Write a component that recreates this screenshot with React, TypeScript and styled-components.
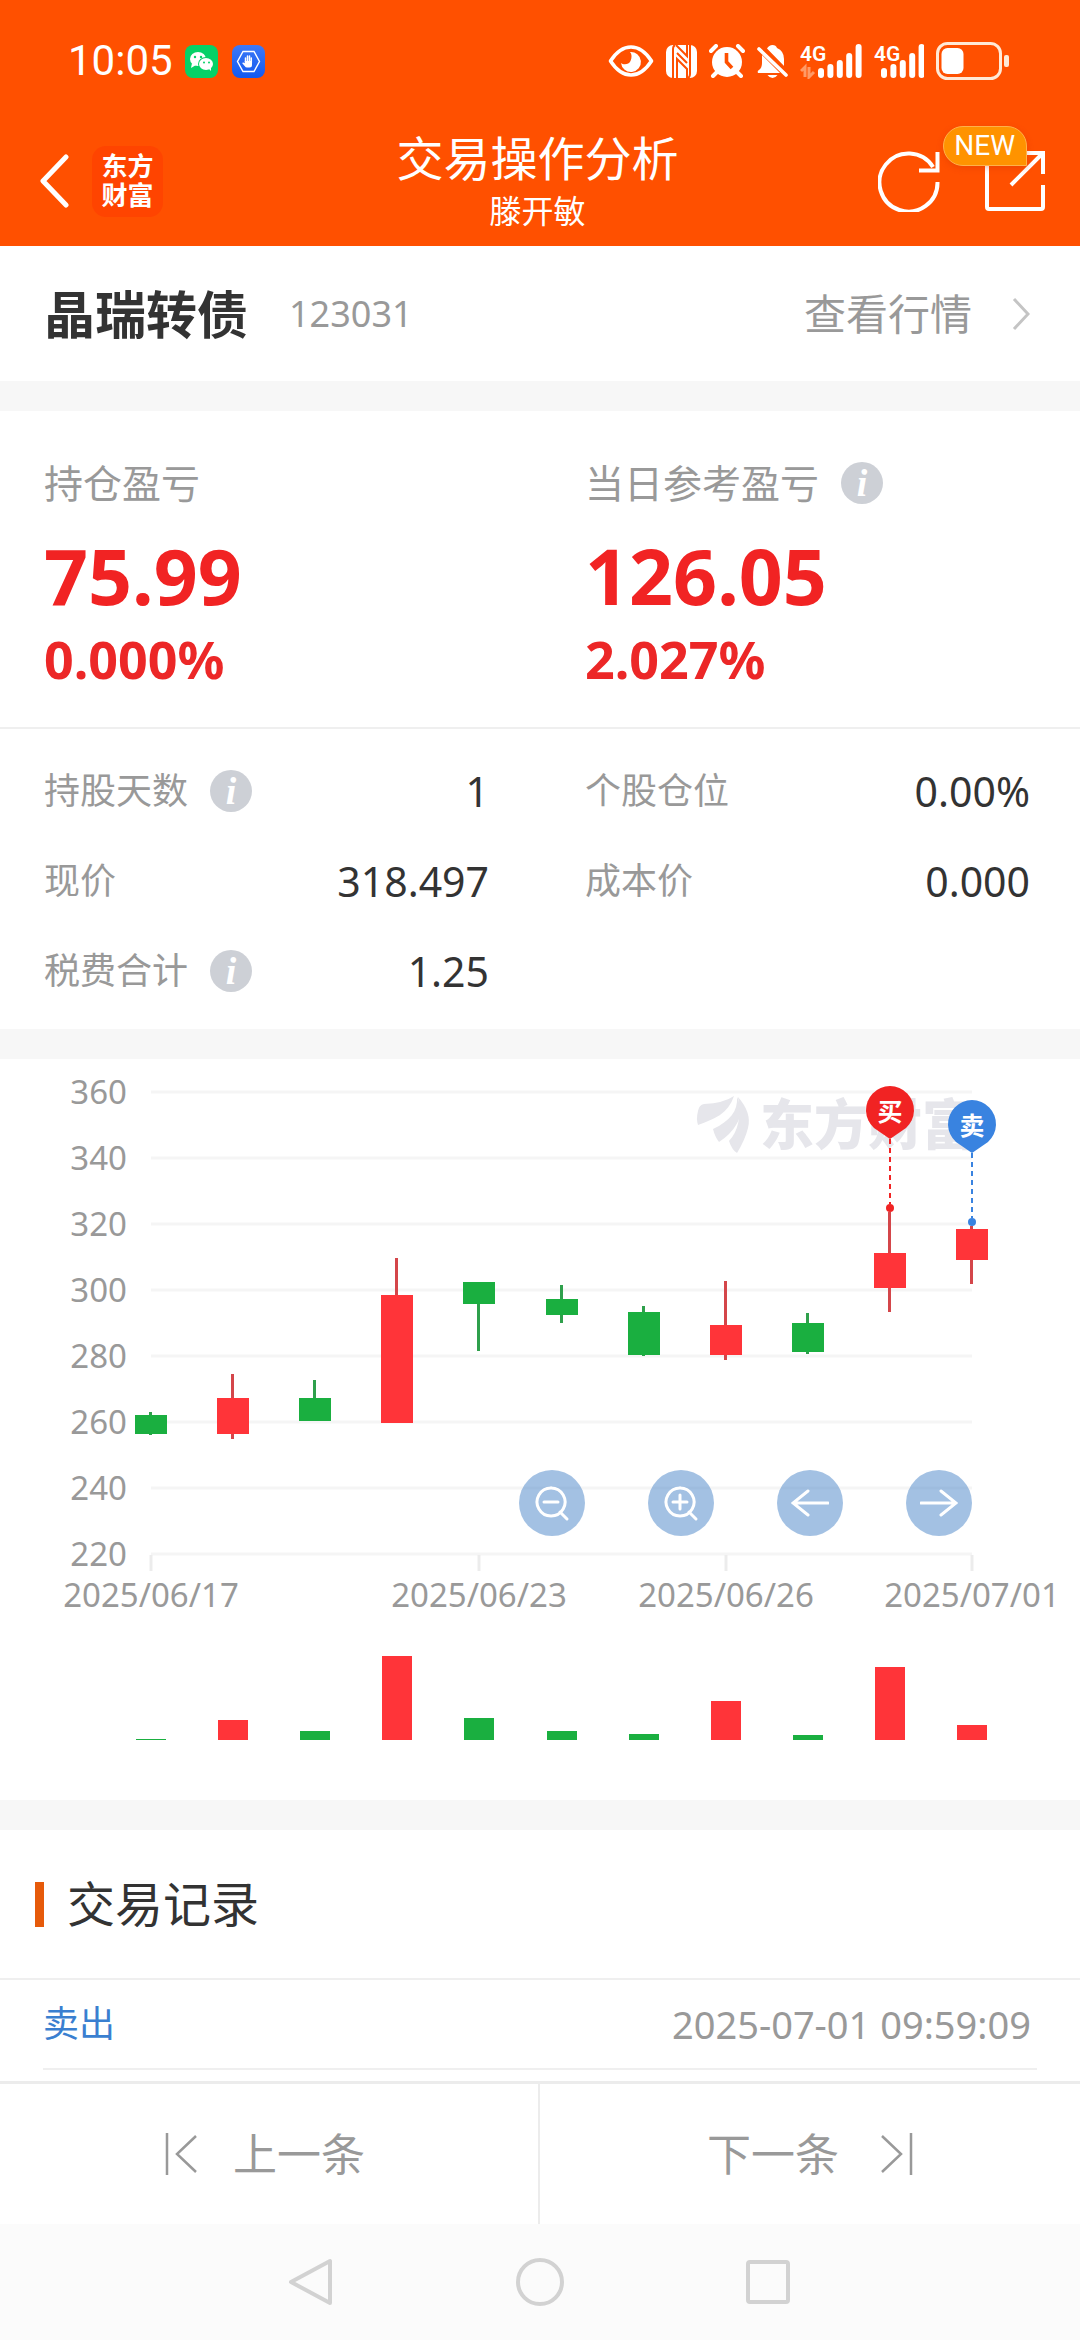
import React from "react";
import styled, { createGlobalStyle } from "styled-components";

const GlobalStyle = createGlobalStyle`
  *, *::before, *::after { box-sizing: border-box; }
  body {
    margin: 0;
    background: #fff;
    color: #333;
    font-family: "Noto Sans", "Noto Sans CJK SC", sans-serif;
  }
  button { border: 0; padding: 0; margin: 0; background: none; font: inherit; color: inherit; cursor: pointer; }
  a { color: inherit; text-decoration: none; }
  h1, h2, p, dl, dd, dt { margin: 0; font-weight: 400; }
  svg { display: block; flex: none; }
`;

const Page = styled.div`
  display: flex;
  flex-direction: column;
  min-height: 100vh;
`;

/* ---------- header ---------- */

const Header = styled.header`
  background: #ff5000;
  color: #fff;
`;

const StatusBar = styled.div`
  display: flex;
  align-items: center;
  height: 122px;
  padding: 0 71px 0 68px;
`;

const Clock = styled.span`
  font-family: Roboto, "Noto Sans", sans-serif;
  font-size: 42px;
  line-height: 52px;
  margin-right: 12px;
`;

const StatusApps = styled.div`
  display: flex;
  gap: 14px;
`;

const StatusIcons = styled.div`
  display: flex;
  align-items: center;
  gap: 12px;
  margin-left: auto;
`;

const TitleBar = styled.div`
  display: grid;
  grid-template-columns: 1fr auto 1fr;
  align-items: center;
  height: 124px;
  padding: 0 35px 6px 30px;
`;

const HeaderStart = styled.div`
  display: flex;
  align-items: center;
  gap: 23px;
`;

const BackButton = styled.button`
  padding-left: 10px;
`;

const BrandLink = styled.a`
  display: grid;
  place-content: center;
  width: 71px;
  height: 71px;
  border-radius: 14px;
  background: #ff4400;
  font-size: 26px;
  font-weight: 700;
  line-height: 29px;
`;

const Titles = styled.div`
  text-align: center;
`;

const Title = styled.h1`
  font-size: 47px;
  line-height: 60px;
`;

const Subtitle = styled.p`
  font-size: 32px;
  line-height: 46px;
`;

const HeaderEnd = styled.div`
  display: flex;
  justify-content: flex-end;
  gap: 45px;
`;

const ShareButton = styled.button`
  position: relative;
`;

const NewBadge = styled.span`
  position: absolute;
  right: 18px;
  top: -24px;
  padding: 0 11px 0 10px;
  border: 1px solid #ffb14a;
  border-radius: 20px 20px 0 20px;
  background: #ff9300;
  font-family: Roboto, "Noto Sans", sans-serif;
  font-size: 28px;
  line-height: 38px;
  box-shadow: 0 2px 6px rgba(200, 50, 0, 0.3);
`;

/* ---------- content ---------- */

const Main = styled.main`
  flex: 1;
`;

const Band = styled.div`
  height: 30px;
  background: #f7f7f7;
`;

const StockRow = styled.section`
  display: flex;
  align-items: center;
  height: 135px;
  padding: 0 50px 0 44px;
`;

const StockName = styled.h2`
  font-size: 51px;
  font-weight: 700;
  line-height: 72px;
`;

const StockCode = styled.span`
  margin-left: 41px;
  font-size: 36px;
  line-height: 50px;
  color: #999;
`;

const QuoteLink = styled.a`
  display: flex;
  align-items: center;
  gap: 40px;
  margin-left: auto;
  font-size: 42px;
  line-height: 60px;
  color: #999;
`;

const Summary = styled.section`
  display: grid;
  grid-template-columns: 1fr 1fr;
  column-gap: 96px;
  padding: 44px 50px 36px 44px;
  border-bottom: 2px solid #efefef;
`;

const SummaryLabel = styled.p`
  display: flex;
  align-items: center;
  gap: 22px;
  font-size: 39px;
  line-height: 56px;
  color: #999;
`;

const SummaryValue = styled.p`
  margin-top: 20px;
  font-size: 77px;
  font-weight: 700;
  line-height: 90px;
  color: #f12323;
`;

const SummaryRate = styled.p`
  margin-top: 6px;
  font-size: 52px;
  font-weight: 700;
  line-height: 64px;
  color: #ec2727;
`;

const InfoButton = styled.button`
  width: 42px;
  height: 42px;
  border-radius: 50%;
  background: #cdd0d6;
  color: #fff;
  font-family: "Liberation Serif", serif;
  font-size: 38px;
  font-style: italic;
  font-weight: 700;
  line-height: 42px;
`;

const Details = styled.dl`
  display: grid;
  grid-template-columns: 1fr 1fr;
  column-gap: 96px;
  padding: 17px 50px 13px 44px;
`;

const DetailItem = styled.div`
  display: flex;
  align-items: center;
  justify-content: space-between;
  height: 90px;
`;

const DetailLabel = styled.dt`
  display: flex;
  align-items: center;
  gap: 22px;
  font-size: 36px;
  line-height: 50px;
  color: #999;
`;

const DetailValue = styled.dd`
  font-size: 41px;
  line-height: 60px;
`;

/* ---------- chart ---------- */

const ChartSection = styled.section`
  position: relative;
`;

const ChartSvg = styled.svg`
  width: 100%;
  height: auto;
`;

const ChartTools = styled.div`
  position: absolute;
  top: 411px;
  right: 10%;
  display: flex;
  gap: 63px;
`;

const ToolButton = styled.button`
  display: grid;
  place-items: center;
  width: 66px;
  height: 66px;
  border-radius: 50%;
  background: rgba(72, 131, 200, 0.5);
`;

/* ---------- records ---------- */

const RecordsHead = styled.div`
  display: flex;
  align-items: center;
  gap: 23px;
  height: 150px;
  padding: 0 35px;
  border-bottom: 2px solid #efefef;
`;

const Accent = styled.span`
  width: 9px;
  height: 45px;
  background: #e65a0a;
`;

const RecordsTitle = styled.h2`
  font-size: 48px;
  line-height: 70px;
`;

const RecordRow = styled.div`
  display: flex;
  align-items: center;
  justify-content: space-between;
  height: 90px;
  margin: 0 43px;
  padding-right: 6px;
  border-bottom: 2px solid #efefef;
`;

const Side = styled.span`
  font-size: 36px;
  line-height: 50px;
  color: #3a7fd0;
`;

const Time = styled.time`
  font-size: 38px;
  line-height: 50px;
  color: #999;
`;

/* ---------- footer ---------- */

const Pager = styled.nav`
  display: grid;
  grid-template-columns: 1fr 1fr;
  height: 143px;
  border-top: 3px solid #ececec;
`;

const PagerButton = styled.button<{ $first?: boolean }>`
  display: flex;
  align-items: center;
  justify-content: center;
  gap: ${(p) => (p.$first ? 36 : 42)}px;
  padding-right: ${(p) => (p.$first ? 8 : 0)}px;
  border-right: ${(p) => (p.$first ? "2px solid #ececec" : "0")};
  font-size: 44px;
  line-height: 60px;
  color: #999;
`;

const SystemNav = styled.nav`
  display: flex;
  align-items: center;
  justify-content: center;
  gap: 180px;
  height: 116px;
  background: #fbfbfb;
`;

/* ---------- icons ---------- */

const WeChatIcon = () => (
  <svg width="33" height="33" viewBox="0 0 33 33">
    <rect width="33" height="33" rx="8" fill="#06d167" />
    <ellipse cx="13" cy="14" rx="8" ry="7" fill="#fff" />
    <path d="M7 18l-1 5 5-3z" fill="#fff" />
    <ellipse cx="21" cy="19" rx="8" ry="7" fill="#06d167" />
    <ellipse cx="21" cy="19" rx="7" ry="6" fill="#fff" />
    <path d="M23 23l3 3 0-5z" fill="#fff" />
    <g fill="#06d167">
      <circle cx="10" cy="12" r="1.2" />
      <circle cx="16" cy="12" r="1.2" />
      <circle cx="19" cy="17.500" r="1" />
      <circle cx="24" cy="17.500" r="1" />
    </g>
  </svg>
);

const GuardIcon = () => (
  <svg width="33" height="33" viewBox="0 0 33 33">
    <defs>
      <linearGradient id="guard" x1="0" y1="0" x2="0" y2="1">
        <stop offset="0" stopColor="#3d79f7" />
        <stop offset="1" stopColor="#1259f0" />
      </linearGradient>
    </defs>
    <rect width="33" height="33" rx="8" fill="url(#guard)" />
    <path d="M11 6.500h11l5.500 10-5.500 10H11L5.500 16.500z" fill="none" stroke="#fff" strokeWidth="1.400" />
    <path d="M13.500 17V13M15.500 18v-7M17.500 18v-7M19.300 18v-5" stroke="#fff" strokeWidth="1.500" strokeLinecap="round" />
    <path d="M12.800 16h7.200v4q0 2.500-2.500 2.500h-2.400q-1.500 0-2.500-1.500l-2.500-3q1-1 2.700.2z" fill="#fff" />
  </svg>
);

const EyeIcon = () => (
  <svg width="46" height="32" viewBox="0 0 46 32">
    <path d="M2.500 16C9 6 15 2 23 2s14 4 20.500 14C37 26 31 30 23 30S9 26 2.500 16z" fill="none" stroke="#fff" strokeWidth="3.600" strokeLinejoin="round" />
    <path d="M22 7a10 10 0 1 1-9 11c2 2 8 2 9.500-2 1.500-3.500 1.500-7-.5-9z" fill="#fff" />
  </svg>
);

const NfcIcon = () => (
  <svg width="31" height="33" viewBox="0 0 31 33">
    <rect width="31" height="33" rx="7" fill="#fff" />
    <path d="M7 33V4q0-3 2-4M24 0v29q0 3-2 4" fill="none" stroke="#ff5000" strokeWidth="2" />
    <path d="M11 33V14l10 10v9M11 8l10 10M10 0l11 11V0" fill="none" stroke="#ff5000" strokeWidth="2" />
  </svg>
);

const AlarmIcon = () => (
  <svg width="36" height="34" viewBox="0 0 36 34">
    <circle cx="18" cy="18" r="15" fill="#fff" />
    <path d="M2 7l5-5M34 7l-5-5M8 28l-4 4M28 28l4 4" stroke="#fff" strokeWidth="4" strokeLinecap="round" />
    <path d="M17.500 9v9l5.500 6" fill="none" stroke="#ff5000" strokeWidth="3.600" />
  </svg>
);

const BellOffIcon = () => (
  <svg width="31" height="34" viewBox="0 0 31 34">
    <path d="M10 4.500Q12 1 15.500 1T20 4q7 3 7 11v7z" fill="#fff" />
    <path d="M5 11l18 18H1q-1-2 1-3 3-2 3-7z" fill="#fff" />
    <path d="M10.500 31h10q-2 3-5 3t-5-3z" fill="#fff" />
    <path d="M3 1l28 27" stroke="#ff5000" strokeWidth="2.500" />
    <path d="M2 5l27 26" stroke="#fff" strokeWidth="3.600" strokeLinecap="round" />
  </svg>
);

const SignalIcon = ({ width, start, data }: { width: number; start: number; data?: boolean }) => (
  <svg width={width} height="36" viewBox={`0 0 ${width} 36`}>
    <text x="0" y="18" fontFamily="Roboto, sans-serif" fontSize="21" fontWeight="600" fill="#fff">
      4G
    </text>
    {data && (
      <path d="M1 28l4-4v10M9 24v10l5-5" fill="none" stroke="#ff9a66" strokeWidth="3" />
    )}
    {[10, 14, 18, 25, 34].map((h, i) => (
      <rect key={h} x={start + i * 9.400} y={35 - h} width="6" height={h} rx="3" fill="#fff" />
    ))}
  </svg>
);

const BatteryIcon = () => (
  <svg width="73" height="38" viewBox="0 0 73 38">
    <rect x="1.500" y="1.500" width="63" height="35" rx="10" fill="none" stroke="#ffe9d6" strokeWidth="3" />
    <rect x="5.500" y="6" width="22" height="26" rx="6" fill="#fff" />
    <rect x="68" y="13" width="5" height="12" rx="2" fill="#ffe9d6" />
  </svg>
);

const BackIcon = () => (
  <svg width="29" height="54" viewBox="0 0 29 54">
    <path d="M26 3L3 27l23 24" fill="none" stroke="#fff" strokeWidth="5" strokeLinecap="round" strokeLinejoin="round" />
  </svg>
);

const RefreshIcon = () => (
  <svg width="62" height="62" viewBox="0 0 62 62">
    <g fill="none" stroke="#fff" strokeWidth="4">
      <path d="M59.500 32A29 29 0 1 1 55 17" />
      <path d="M59.500 2v18.500H41" />
    </g>
  </svg>
);

const ShareIcon = () => (
  <svg width="60" height="60" viewBox="0 0 60 60">
    <g fill="none" stroke="#fff" strokeWidth="4">
      <path d="M2 8v48q0 2 2 2h52q2 0 2-2V34" strokeLinejoin="round" />
      <path d="M40 2h18v21M58 2L26 34" />
    </g>
  </svg>
);

const ChevronRight = () => (
  <svg width="18" height="34" viewBox="0 0 18 34">
    <path d="M2 2l14 15L2 32" fill="none" stroke="#c4c4c4" strokeWidth="3" />
  </svg>
);

const EdgeIcon = ({ flip }: { flip?: boolean }) => (
  <svg width="32" height="42" viewBox="0 0 32 42">
    <path
      d={flip ? "M1 3l19 18L1 39M30 0v42" : "M31 3L12 21l19 18M2 0v42"}
      fill="none"
      stroke="#999"
      strokeWidth="2.500"
    />
  </svg>
);

const toolPaths = {
  缩小: "M18 4a14 14 0 1 0 .1 0M11 18h14M27 28l7 7",
  放大: "M18 4a14 14 0 1 0 .1 0M11 18h14M18 11v14M27 28l7 7",
  左移: "M37 19H2M17 7L2 19l15 12",
  右移: "M1 19h35M21 7l15 12-15 12",
};

/* ---------- chart data ---------- */

type Candle = { open: number; close: number; high: number; low: number; volume: number };

const candles: Candle[] = [
  { open: 262.3, close: 256.8, high: 263.2, low: 256.3, volume: 1 },
  { open: 256.6, close: 267.7, high: 274.8, low: 255.1, volume: 20 },
  { open: 267.7, close: 260.5, high: 272.9, low: 260.5, volume: 9 },
  { open: 260.1, close: 298.8, high: 310, low: 260.1, volume: 84 },
  { open: 302.6, close: 296.2, high: 302.6, low: 281.7, volume: 22 },
  { open: 297.5, close: 292.6, high: 301.7, low: 290.2, volume: 9 },
  { open: 293.5, close: 280.5, high: 295.6, low: 280.2, volume: 6 },
  { open: 280.5, close: 289.7, high: 302.9, low: 279.2, volume: 39 },
  { open: 290.3, close: 281.5, high: 293.3, low: 280.8, volume: 5 },
  { open: 301, close: 311.4, high: 323.9, low: 293.6, volume: 73 },
  { open: 309.5, close: 318.9, high: 319.8, low: 302, volume: 15 },
];

const levels = [360, 340, 320, 300, 280, 260, 240, 220];
const dates = [
  { index: 0, label: "2025/06/17" },
  { index: 4, label: "2025/06/23" },
  { index: 7, label: "2025/06/26" },
  { index: 10, label: "2025/07/01" },
];

const candleX = (i: number) => Math.round(151 + i * 82.1);
const priceY = (v: number) => Math.round(496 - (v - 220) * 3.3);
const RED = "#ff3439";
const GREEN = "#1aaf40";
const VOLUME_BASE = 681;

const TradePin = ({ x, y, color, text }: { x: number; y: number; color: string; text: string }) => (
  <g>
    <path d={`M${x} ${y + 27}V${y + 92}`} stroke={color} strokeWidth="2" strokeDasharray="5 4" />
    <circle cx={x} cy={y + 96} r="4" fill={color} />
    <path d={`M${x} ${y + 27}l-16-11a24 24 0 1 1 32 0z`} fill={color} />
    <text x={x} y={y + 9} textAnchor="middle" fontSize="25" fontWeight="700" fill="#fff">
      {text}
    </text>
  </g>
);

const Chart = () => (
  <ChartSvg viewBox="0 0 1080 741" role="img" aria-label="K线图">
    {levels.map((v) => (
      <g key={v}>
        <path d={`M151 ${priceY(v)}H972`} transform="translate(0 -1)" stroke="#f5f5f5" strokeWidth="3" />
        <text x="127" y={priceY(v) + 11} textAnchor="end" fontSize="33" fill="#999">
          {v}
        </text>
      </g>
    ))}
    <g fill="#e6e6eb">
      <path d="M698 52q1-6 6-7 20-1 30-8-4 12-14 19-8 5-22 10-2-6 0-14z" />
      <path d="M713 70C730 62 738 52 737 38q7 16-1 28-5 9-17 17-4-5-6-13z" />
      <path d="M738 38q14 16 10 31-3 12-11 25-5-3-8-12 14-15 9-44z" />
      <text x="760" y="86" fontSize="54" fontWeight="900">
        东方财富
      </text>
    </g>
    {dates.map(({ index, label }) => (
      <g key={label}>
        <path d={`M${candleX(index)} 496v16`} stroke="#ececec" strokeWidth="3" />
        <text x={candleX(index)} y="548" textAnchor="middle" fontSize="33" fill="#999">
          {label}
        </text>
      </g>
    ))}
    {candles.map((c, i) => {
      const up = c.close > c.open;
      const top = priceY(Math.max(c.open, c.close));
      const bottom = priceY(Math.min(c.open, c.close));
      const x = candleX(i);
      return (
        <g key={i} fill={up ? RED : GREEN}>
          <rect
            x={x - 2}
            y={priceY(c.high)}
            width="3"
            height={priceY(c.low) - priceY(c.high)}
            fill={up ? "#d4464a" : "#2fa04c"}
          />
          <rect x={x - 16} y={top} width="32" height={bottom - top} />
          <rect x={x - 15} y={VOLUME_BASE - c.volume} width="30" height={c.volume} />
        </g>
      );
    })}
    <TradePin x={890} y={53} color="#f12323" text="买" />
    <TradePin x={972} y={67} color="#3983e0" text="卖" />
  </ChartSvg>
);

const Info = ({ label }: { label: string }) => (
  <InfoButton type="button" aria-label={label}>
    i
  </InfoButton>
);

const details = [
  { label: "持股天数", value: "1", info: true },
  { label: "个股仓位", value: "0.00%" },
  { label: "现价", value: "318.497" },
  { label: "成本价", value: "0.000" },
  { label: "税费合计", value: "1.25", info: true },
];

export default function App() {
  return (
    <Page>
      <GlobalStyle />
      <Header>
        <StatusBar>
          <Clock>10:05</Clock>
          <StatusApps>
            <WeChatIcon />
            <GuardIcon />
          </StatusApps>
          <StatusIcons>
            <EyeIcon />
            <NfcIcon />
            <AlarmIcon />
            <BellOffIcon />
            <SignalIcon width={62} start={18} data />
            <SignalIcon width={50} start={7} />
            <BatteryIcon />
          </StatusIcons>
        </StatusBar>
        <TitleBar>
          <HeaderStart>
            <BackButton type="button" aria-label="返回">
              <BackIcon />
            </BackButton>
            <BrandLink href="#home">
              <span>东方</span>
              <span>财富</span>
            </BrandLink>
          </HeaderStart>
          <Titles>
            <Title>交易操作分析</Title>
            <Subtitle>滕开敏</Subtitle>
          </Titles>
          <HeaderEnd>
            <button type="button" aria-label="刷新">
              <RefreshIcon />
            </button>
            <ShareButton type="button" aria-label="分享">
              <ShareIcon />
              <NewBadge>NEW</NewBadge>
            </ShareButton>
          </HeaderEnd>
        </TitleBar>
      </Header>

      <Main>
        <StockRow>
          <StockName>晶瑞转债</StockName>
          <StockCode>123031</StockCode>
          <QuoteLink href="#quote">
            查看行情
            <ChevronRight />
          </QuoteLink>
        </StockRow>
        <Band />
        <Summary>
          <div>
            <SummaryLabel>持仓盈亏</SummaryLabel>
            <SummaryValue>75.99</SummaryValue>
            <SummaryRate>0.000%</SummaryRate>
          </div>
          <div>
            <SummaryLabel>
              当日参考盈亏
              <Info label="当日参考盈亏说明" />
            </SummaryLabel>
            <SummaryValue>126.05</SummaryValue>
            <SummaryRate>2.027%</SummaryRate>
          </div>
        </Summary>
        <Details>
          {details.map((d) => (
            <DetailItem key={d.label}>
              <DetailLabel>
                {d.label}
                {d.info && <Info label={`${d.label}说明`} />}
              </DetailLabel>
              <DetailValue>{d.value}</DetailValue>
            </DetailItem>
          ))}
        </Details>
        <Band />
        <ChartSection>
          <Chart />
          <ChartTools>
            {Object.entries(toolPaths).map(([name, d]) => (
              <ToolButton key={name} type="button" aria-label={name}>
                <svg width="38" height="38" viewBox="0 0 38 38">
                  <path d={d} fill="none" stroke="#fff" strokeWidth="3" strokeLinecap="round" />
                </svg>
              </ToolButton>
            ))}
          </ChartTools>
        </ChartSection>
        <Band />
        <section>
          <RecordsHead>
            <Accent />
            <RecordsTitle>交易记录</RecordsTitle>
          </RecordsHead>
          <RecordRow>
            <Side>卖出</Side>
            <Time dateTime="2025-07-01T09:59:09">2025-07-01 09:59:09</Time>
          </RecordRow>
        </section>
      </Main>

      <Pager aria-label="记录翻页">
        <PagerButton type="button" $first>
          <EdgeIcon />
          上一条
        </PagerButton>
        <PagerButton type="button">
          下一条
          <EdgeIcon flip />
        </PagerButton>
      </Pager>
      <SystemNav aria-label="系统导航">
        <button type="button" aria-label="后退">
          <svg width="48" height="48" viewBox="0 0 48 48">
            <path d="M42 3v42L3 24z" fill="none" stroke="#d2d2d2" strokeWidth="4" strokeLinejoin="round" />
          </svg>
        </button>
        <button type="button" aria-label="主屏幕">
          <svg width="48" height="48" viewBox="0 0 48 48">
            <circle cx="24" cy="24" r="22" fill="none" stroke="#d2d2d2" strokeWidth="4" />
          </svg>
        </button>
        <button type="button" aria-label="最近任务">
          <svg width="48" height="48" viewBox="0 0 48 48">
            <rect x="4" y="4" width="40" height="40" rx="2" fill="none" stroke="#d2d2d2" strokeWidth="4" />
          </svg>
        </button>
      </SystemNav>
    </Page>
  );
}
